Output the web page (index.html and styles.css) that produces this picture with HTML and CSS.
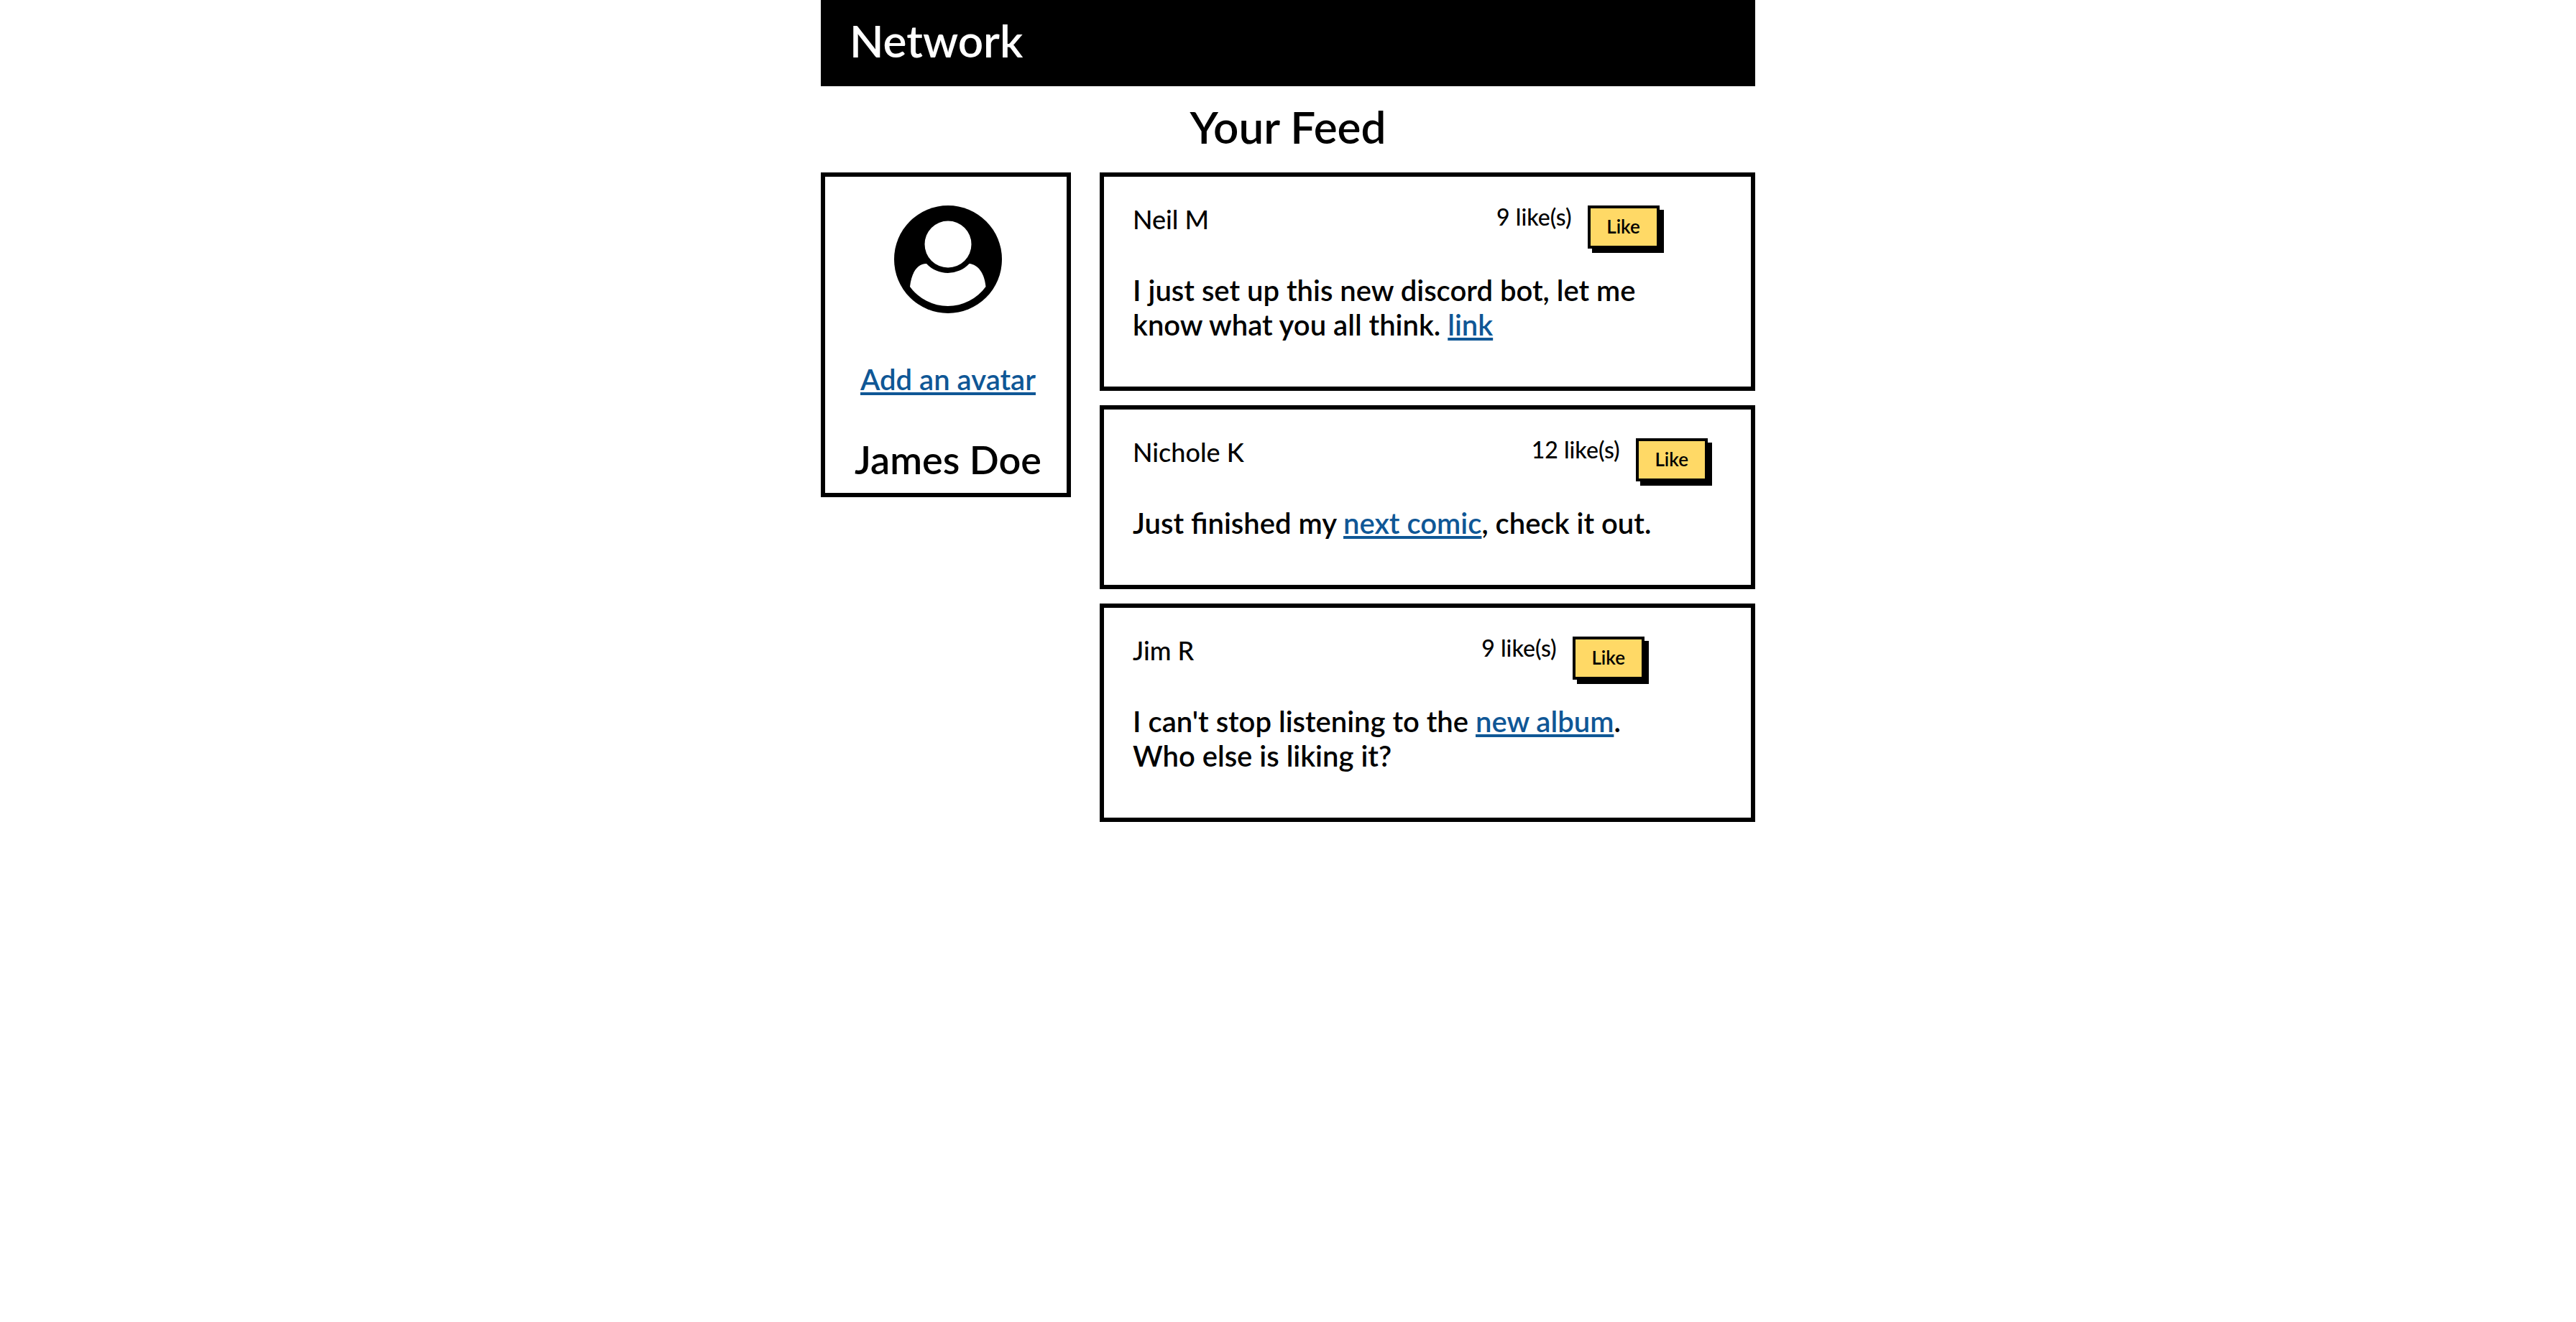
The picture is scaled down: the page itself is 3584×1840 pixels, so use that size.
FILE: index.html
```html
<!DOCTYPE html>
<html lang="en">
<head>
<meta charset="utf-8">
<meta name="viewport" content="width=device-width, initial-scale=1">
<title>Network</title>
<link rel="stylesheet" href="styles.css">
</head>
<body>
<div class="page">
  <header class="site-header"><h1 class="brand">Network</h1></header>
  <h2 class="page-title">Your Feed</h2>
  <main class="layout">
    <aside class="profile">
      <svg class="avatar" viewBox="0 0 150 150" aria-hidden="true">
        <circle cx="75" cy="75" r="75" fill="#000"/>
        <circle cx="75" cy="54" r="32.5" fill="#fff"/>
        <path d="M22 113C24 94 32 81 45 81A40.5 40.5 0 0 0 104.500 81C117 82 126 95 127.500 113A65 65 0 0 1 22 113Z" fill="#fff"/>
      </svg>
      <a class="avatar-link" href="#">Add an avatar</a>
      <h3 class="profile-name">James Doe</h3>
    </aside>
    <section class="feed">
      <article class="post">
        <div class="post-head">
          <span class="author">Neil M</span>
          <div class="likes"><span class="count">9 like(s)</span><button class="like" type="button">Like</button></div>
        </div>
        <p class="post-text">I just set up this new discord bot, let me know what you all think. <a href="#">link</a></p>
      </article>
      <article class="post">
        <div class="post-head">
          <span class="author">Nichole K</span>
          <div class="likes"><span class="count">12 like(s)</span><button class="like" type="button">Like</button></div>
        </div>
        <p class="post-text">Just finished my <a href="#">next comic</a>, check it out.</p>
      </article>
      <article class="post">
        <div class="post-head">
          <span class="author">Jim R</span>
          <div class="likes"><span class="count">9 like(s)</span><button class="like" type="button">Like</button></div>
        </div>
        <p class="post-text">I can't stop listening to the <a href="#">new album</a>. Who else is liking it?</p>
      </article>
    </section>
  </main>
</div>
</body>
</html>
```
FILE: styles.css
```css
* {
  box-sizing: border-box;
}

body {
  margin: 0;
  background: #fff;
  color: #000;
  font-family: Lato, "Open Sans", sans-serif;
  font-size: 40px;
  font-weight: 600;
  line-height: 48px;
}

h1, h2, h3, p {
  margin: 0;
  font-weight: 600;
}

a {
  color: #0f5796;
  text-decoration: underline;
  text-decoration-thickness: 4px;
  text-underline-offset: 3px;
  text-decoration-skip-ink: none;
}

.page {
  max-width: 1300px;
  margin: 0 auto;
}

.site-header {
  padding: 16px 40px 24px;
  background: #000;
  color: #fff;
}

.brand {
  font-size: 62px;
  line-height: 80px;
}

.page-title {
  padding: 16px 0 24px;
  font-size: 62px;
  line-height: 80px;
  text-align: center;
}

.layout {
  display: grid;
  grid-template-columns: 348px minmax(0, 1fr);
  align-items: start;
  gap: 40px;
}

.profile {
  display: flex;
  flex-direction: column;
  align-items: center;
  padding: 40px 34px 16px 40px;
  border: 6px solid #000;
}

.avatar {
  width: 150px;
  height: 150px;
}

.avatar-link {
  margin: 68px 0 58px;
  white-space: nowrap;
}

.profile-name {
  font-size: 54px;
  line-height: 60px;
  white-space: nowrap;
}

.feed {
  display: flex;
  flex-direction: column;
  gap: 20px;
}

.post {
  padding: 40px 40px 62px;
  border: 6px solid #000;
}

.post-head {
  display: flex;
  align-items: flex-start;
  gap: 400px;
}

.author {
  font-size: 36px;
  font-weight: 500;
  line-height: 38px;
  white-space: nowrap;
}

.likes {
  display: flex;
  align-items: flex-start;
  gap: 22px;
}

.count {
  font-size: 32px;
  font-weight: 500;
  line-height: 32px;
  white-space: nowrap;
}

.like {
  width: 100px;
  height: 60px;
  padding: 0 0 2px;
  border: 4px solid #000;
  background: #ffd966;
  box-shadow: 6px 6px 0 #000;
  color: #000;
  font: inherit;
  font-size: 26px;
  line-height: 32px;
}

.post-text {
  max-width: 760px;
  margin-top: 34px;
}
```
